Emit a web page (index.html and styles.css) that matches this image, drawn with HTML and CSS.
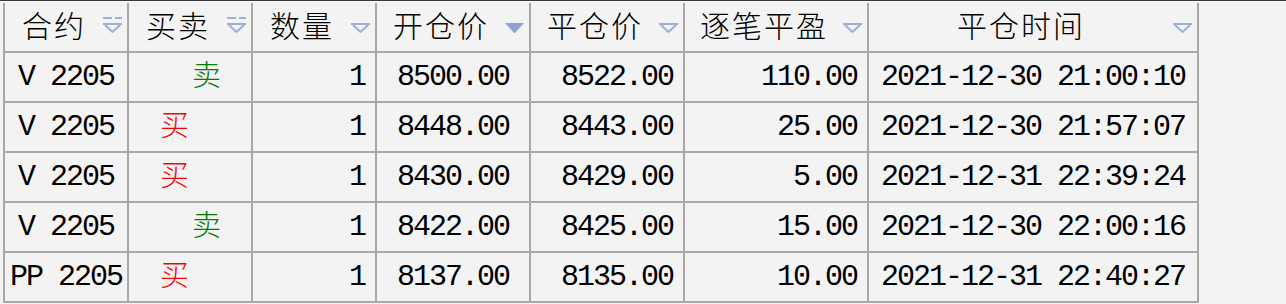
FILE: index.html
```html
<!DOCTYPE html>
<html lang="zh-CN">
<head>
<meta charset="utf-8">
<title>平仓明细</title>
<link rel="stylesheet" href="styles.css">
</head>
<body>
<div class="topline"></div>
<div class="grid">
  <div class="hd"><span class="ht">合约</span><svg class="arrow" viewBox="0 0 19 16"><rect x="0" y="0" width="9" height="2"/><rect x="12" y="0" width="7" height="2"/><rect x="0" y="6" width="19" height="2"/><path d="M2 8 L9.5 15 L17 8" class="tri"/></svg></div>
  <div class="hd"><span class="ht">买卖</span><svg class="arrow" viewBox="0 0 19 16"><rect x="0" y="0" width="9" height="2"/><rect x="12" y="0" width="7" height="2"/><rect x="0" y="6" width="19" height="2"/><path d="M2 8 L9.5 15 L17 8" class="tri"/></svg></div>
  <div class="hd"><span class="ht">数量</span><svg class="arrow" viewBox="0 0 19 16"><rect x="0" y="6" width="19" height="2"/><path d="M2 8 L9.5 15 L17 8" class="tri"/></svg></div>
  <div class="hd"><span class="ht">开仓价</span><svg class="arrow sorted" viewBox="0 0 19 16"><polygon points="0,6 19,6 9.5,16.5"/></svg></div>
  <div class="hd"><span class="ht">平仓价</span><svg class="arrow" viewBox="0 0 19 16"><rect x="0" y="6" width="19" height="2"/><path d="M2 8 L9.5 15 L17 8" class="tri"/></svg></div>
  <div class="hd"><span class="ht">逐笔平盈</span><svg class="arrow" viewBox="0 0 19 16"><rect x="0" y="6" width="19" height="2"/><path d="M2 8 L9.5 15 L17 8" class="tri"/></svg></div>
  <div class="hd"><span class="ht">平仓时间</span><svg class="arrow" viewBox="0 0 19 16"><rect x="0" y="6" width="19" height="2"/><path d="M2 8 L9.5 15 L17 8" class="tri"/></svg></div>

  <div class="c ctr">V 2205</div><div class="c side sell">卖</div><div class="c rt">1</div><div class="c ctr">8500.00</div><div class="c rt">8522.00</div><div class="c rt">110.00</div><div class="c ctr">2021-12-30 21:00:10</div>
  <div class="c ctr">V 2205</div><div class="c side buy">买</div><div class="c rt">1</div><div class="c ctr">8448.00</div><div class="c rt">8443.00</div><div class="c rt">25.00</div><div class="c ctr">2021-12-30 21:57:07</div>
  <div class="c ctr">V 2205</div><div class="c side buy">买</div><div class="c rt">1</div><div class="c ctr">8430.00</div><div class="c rt">8429.00</div><div class="c rt">5.00</div><div class="c ctr">2021-12-31 22:39:24</div>
  <div class="c ctr">V 2205</div><div class="c side sell">卖</div><div class="c rt">1</div><div class="c ctr">8422.00</div><div class="c rt">8425.00</div><div class="c rt">15.00</div><div class="c ctr">2021-12-30 22:00:16</div>
  <div class="c ctr">PP 2205</div><div class="c side buy">买</div><div class="c rt">1</div><div class="c ctr">8137.00</div><div class="c rt">8135.00</div><div class="c rt">10.00</div><div class="c ctr">2021-12-31 22:40:27</div>
</div>
</body>
</html>
```

FILE: styles.css
```css
html, body {
  margin: 0;
  padding: 0;
  background: #f3f3f3;
}

body {
  width: 1286px;
  height: 304px;
  overflow: hidden;
  color: #000;
}

.topline {
  height: 1px;
  background: #3a3a3a;
}

.grid {
  display: grid;
  grid-template-columns: 124px 124px 124px 154px 154px 184px 330px;
  grid-auto-rows: 50px;
  width: 1194px;
  margin: 2px 0 0 3px;
  border-left: 2px solid #a8a8a8;
}

.hd,
.c {
  box-sizing: border-box;
  border-right: 2px solid #a8a8a8;
  border-bottom: 2px solid #a8a8a8;
  overflow: hidden;
  white-space: pre;
}

.hd {
  display: flex;
  align-items: flex-start;
  padding-right: 5px;
}

.ht {
  flex: 1;
  text-align: center;
  font-family: "Noto Sans CJK SC", sans-serif;
  font-weight: 300;
  font-size: 30px;
  letter-spacing: 2px;
  line-height: 42px;
}

.arrow {
  flex: none;
  width: 19px;
  height: 16px;
  margin-top: 14px;
  fill: #9cafd8;
}

.arrow .tri {
  fill: none;
  stroke: #9cafd8;
  stroke-width: 2;
}

.arrow.sorted {
  fill: #8ea3d1;
}

.c {
  font-family: "Liberation Mono", "Noto Sans CJK SC", monospace;
  font-size: 30px;
  letter-spacing: -2px;
  line-height: 48px;
}

.ctr {
  text-align: center;
}

.rt {
  text-align: right;
  padding-right: 10px;
}

.c.side {
  font-family: "Noto Sans CJK SC", sans-serif;
  font-weight: 300;
  font-size: 29px;
  letter-spacing: 0;
  line-height: 40px;
}

.buy {
  color: #ff0000;
  padding-left: 31px;
}

.sell {
  color: #008000;
  padding-left: 63px;
}
```
